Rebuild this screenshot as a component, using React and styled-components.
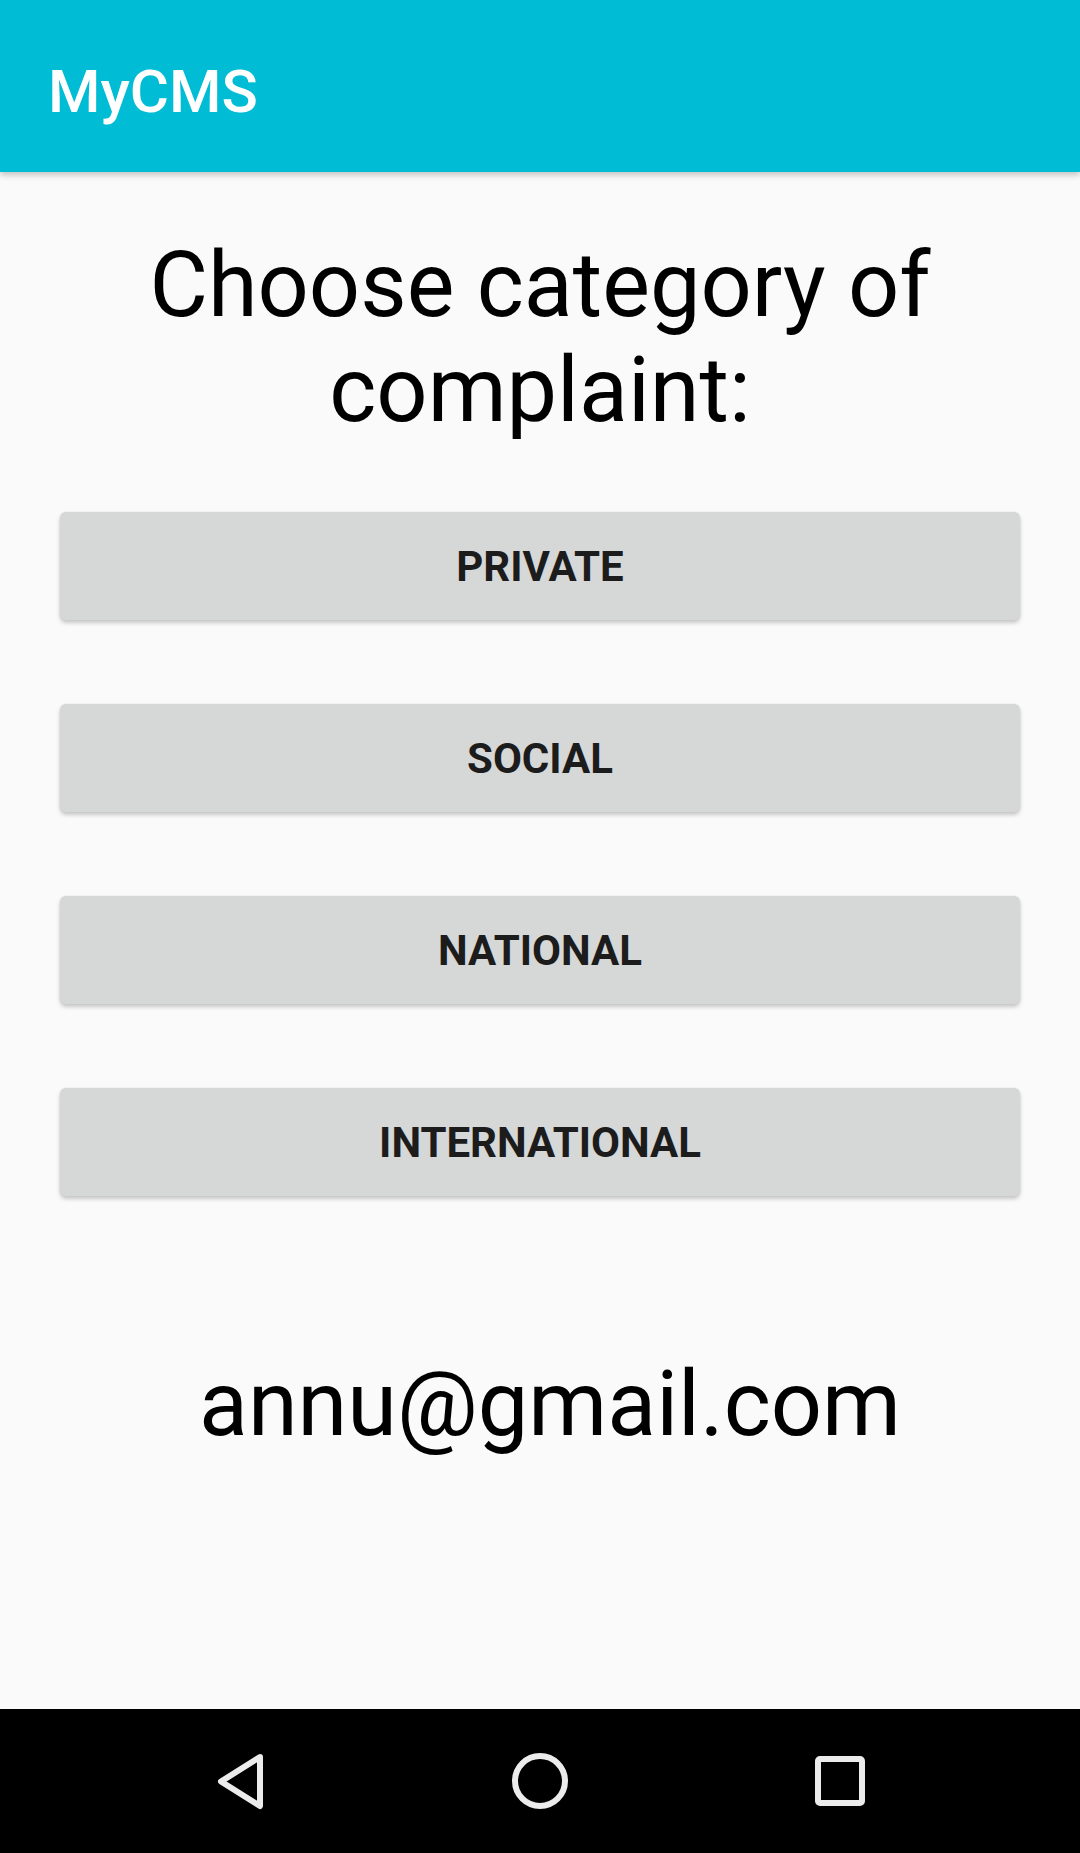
import React from 'react';
import styled, { createGlobalStyle } from 'styled-components';

const GlobalStyle = createGlobalStyle`
  html, body {
    margin: 0;
    padding: 0;
    background: #fafafa;
  }
  body {
    font-family: Roboto, "Noto Sans", sans-serif;
  }
`;

const Screen = styled.div`
  width: 1080px;
  height: 1853px;
  display: flex;
  flex-direction: column;
  background: #fafafa;
  overflow: hidden;
`;

const AppBar = styled.header`
  height: 172px;
  box-sizing: border-box;
  flex-shrink: 0;
  display: flex;
  align-items: center;
  padding: 10px 0 0 48px;
  background: #00bcd4;
  box-shadow: 0 3px 6px rgba(0, 0, 0, 0.22);
  position: relative;
  z-index: 1;
`;

const Title = styled.h1`
  margin: 0;
  font-family: Roboto, sans-serif;
  font-size: 60px;
  font-weight: 500;
  color: #ffffff;
`;

const Content = styled.main`
  flex: 1;
  display: flex;
  flex-direction: column;
  padding: 61px 60px 0;
`;

const Heading = styled.h2`
  margin: 0;
  font-family: Roboto, sans-serif;
  font-size: 90px;
  line-height: 105px;
  font-weight: 400;
  color: #000;
  text-align: center;
`;

const ButtonList = styled.div`
  display: flex;
  flex-direction: column;
  gap: 84px;
  margin-top: 69px;
`;

const CategoryButton = styled.button`
  height: 108px;
  border: none;
  border-radius: 6px;
  background: #d6d7d7;
  color: #1c1c1c;
  font-family: Roboto, sans-serif;
  font-size: 42px;
  font-weight: 700;
  text-transform: uppercase;
  box-shadow: 0 3px 4px rgba(0, 0, 0, 0.2), 0 0 2px rgba(0, 0, 0, 0.1);
  cursor: pointer;
`;

const Email = styled.p`
  margin: 156px 0 0;
  padding-left: 20px;
  font-family: Roboto, sans-serif;
  font-size: 90px;
  line-height: 105px;
  color: #000;
  text-align: center;
`;

const NavBar = styled.nav`
  height: 144px;
  flex-shrink: 0;
  background: #000;
  display: grid;
  grid-template-columns: repeat(3, 300px);
  justify-content: center;
  align-items: center;
`;

const NavSlot = styled.div`
  display: flex;
  justify-content: center;
  align-items: center;
  height: 72px;
`;

const iconStroke = {
  fill: 'none',
  stroke: '#ececec',
  strokeWidth: 6,
  strokeLinejoin: 'round',
};

function BackIcon() {
  return (
    <svg width="72" height="72" viewBox="0 0 72 72">
      <path d="M56 12 L17 36.5 L56 61 Z" {...iconStroke} />
    </svg>
  );
}

function HomeIcon() {
  return (
    <svg width="72" height="72" viewBox="0 0 72 72">
      <circle cx="36" cy="36" r="25" {...iconStroke} />
    </svg>
  );
}

function RecentsIcon() {
  return (
    <svg width="72" height="72" viewBox="0 0 72 72">
      <rect x="14" y="14" width="44" height="44" rx="2" {...iconStroke} />
    </svg>
  );
}

const categories = ['Private', 'Social', 'National', 'International'];

export default function App() {
  return (
    <>
      <GlobalStyle />
      <Screen>
        <AppBar>
          <Title>MyCMS</Title>
        </AppBar>
        <Content>
          <Heading>Choose category of complaint:</Heading>
          <ButtonList>
            {categories.map((c) => (
              <CategoryButton key={c}>{c}</CategoryButton>
            ))}
          </ButtonList>
          <Email>annu@gmail.com</Email>
        </Content>
        <NavBar>
          <NavSlot><BackIcon /></NavSlot>
          <NavSlot><HomeIcon /></NavSlot>
          <NavSlot><RecentsIcon /></NavSlot>
        </NavBar>
      </Screen>
    </>
  );
}
